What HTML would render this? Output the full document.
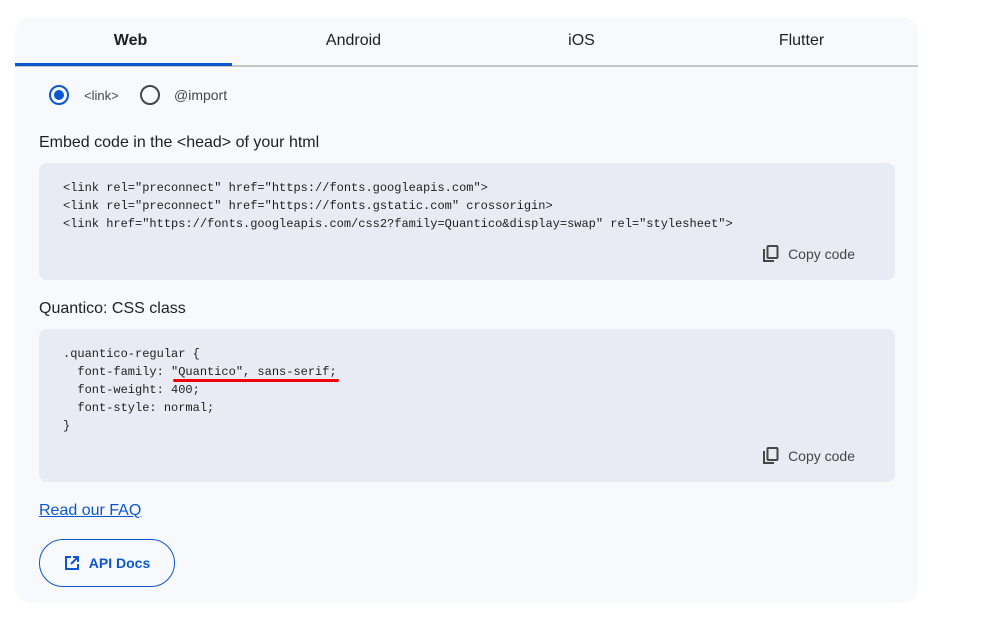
<!DOCTYPE html>
<html><head><style>
*{box-sizing:border-box;margin:0;padding:0}
body{width:983px;height:625px;background:#fff;font-family:"Liberation Sans",sans-serif;position:relative;overflow:hidden}
.card{position:absolute;left:15px;top:17px;width:903px;height:586px;background:#f8f9fd;border-radius:16px}
.tabs{position:absolute;left:15px;top:17px;width:903px;height:50px;border-bottom:2px solid #c4c7c5}
.tab{position:absolute;top:15px;font-size:16px;color:#1f1f1f;text-align:center;width:217px}
.ul{position:absolute;left:0;top:46px;width:217px;height:3px;background:#0b57d0}
.abs{position:absolute}
.code{position:absolute;left:39px;width:856px;background:#e8ebf3;border-radius:8px;font-family:"Liberation Mono",monospace;font-size:12px;color:#1f1f1f;line-height:18px;padding:16px 24px;white-space:pre}
.copy{position:absolute;right:39px;font-family:"Liberation Sans",sans-serif;font-size:14px;color:#444746;display:flex;align-items:center;gap:9px}
</style></head><body>
<div class="card"></div>
<div class="tabs">
<div class="tab" style="left:7px;font-weight:bold">Web</div>
<div class="tab" style="left:230px">Android</div>
<div class="tab" style="left:458px">iOS</div>
<div class="tab" style="left:678px">Flutter</div>
<div class="ul"></div>
</div>
<div class="abs" style="left:49px;top:85px;width:20px;height:20px;border:2px solid #0b57d0;border-radius:50%"><div style="position:absolute;left:3px;top:3px;width:10px;height:10px;border-radius:50%;background:#0b57d0"></div></div>
<div class="abs" style="left:84px;top:88px;font-size:13px;color:#444746">&lt;link&gt;</div>
<div class="abs" style="left:140px;top:85px;width:20px;height:20px;border:2px solid #444746;border-radius:50%"></div>
<div class="abs" style="left:174px;top:87px;font-size:14px;color:#444746">@import</div>
<div class="abs" style="left:39px;top:134px;font-size:16px;color:#1f1f1f">Embed code in the &lt;head&gt; of your html</div>
<div class="code" style="top:163px;height:117px;padding-top:16px">&lt;link rel="preconnect" href="https://fonts.googleapis.com"&gt;
&lt;link rel="preconnect" href="https://fonts.gstatic.com" crossorigin&gt;
&lt;link href="https://fonts.googleapis.com/css2?family=Quantico&amp;display=swap" rel="stylesheet"&gt;<div class="copy" style="top:82px;right:40px"><svg width="16" height="18" viewBox="0 0 16 18"><rect x="4.5" y="1" width="10" height="12" rx="1" fill="none" stroke="#444746" stroke-width="2"/><path d="M1 4v12h10" fill="none" stroke="#444746" stroke-width="2"/></svg>Copy code</div></div>
<div class="abs" style="left:39px;top:300px;font-size:16px;color:#1f1f1f">Quantico: CSS class</div>
<div class="code" style="top:329px;height:153px;padding-top:16px">.quantico-regular {
  font-family: "Quantico", sans-serif;
  font-weight: 400;
  font-style: normal;
}<div class="copy" style="top:118px;right:40px"><svg width="16" height="18" viewBox="0 0 16 18"><rect x="4.5" y="1" width="10" height="12" rx="1" fill="none" stroke="#444746" stroke-width="2"/><path d="M1 4v12h10" fill="none" stroke="#444746" stroke-width="2"/></svg>Copy code</div></div>
<div class="abs" style="left:173px;top:379px;width:166px;height:3px;background:#e00;border-radius:2px"></div>
<div class="abs" style="left:39px;top:502px;font-size:16px;color:#0b57d0;text-decoration:underline">Read our FAQ</div>
<div class="abs" style="left:39px;top:539px;width:136px;height:48px;border:1.5px solid #0b57d0;border-radius:24px;display:flex;align-items:center;justify-content:center;gap:9px;color:#0b57d0;font-weight:bold;font-size:14px"><svg width="16" height="16" viewBox="0 0 16 16"><path d="M7 2H2v12h12V9M9 2h5v5M14 2L7 9" fill="none" stroke="#0b57d0" stroke-width="2"/></svg>API Docs</div>
</body></html>
